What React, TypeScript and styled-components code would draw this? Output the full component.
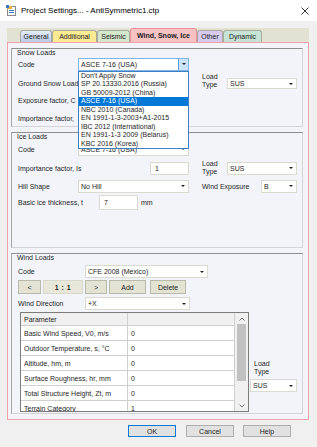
import React from "react";
import styled, { createGlobalStyle } from "styled-components";

const GlobalStyle = createGlobalStyle`
	* {
		box-sizing: border-box;
	}
	body {
		margin: 0;
		background: #ffffff;
		font-family: "Liberation Sans", Arial, sans-serif;
		font-size: 7px;
		color: #1e1e1e;
	}
`;

const Window = styled.div`
	width: 317px;
	height: 447px;
	background: #f0f0f0;
	display: flex;
	flex-direction: column;
	overflow: hidden;
`;

const TitleBar = styled.div`
	flex: none;
	height: 21px;
	background: #ffffff;
	display: flex;
	align-items: center;
	padding: 0 8px 0 6px;
	font-size: 8px;
	color: #000000;
`;

const TitleText = styled.span`
	flex: 1;
	margin-left: 4px;
`;

const Body = styled.div`
	flex: none;
	padding: 7px 8px 0 7px;
	display: flex;
	flex-direction: column;
`;

const TabStrip = styled.div`
	height: 14px;
	background: #e2e2d2;
	display: flex;
	align-items: flex-end;
	padding-left: 13px;
`;

const Tab = styled.div<{ $w: number; $bg: string; $active?: boolean }>`
	width: ${(p) => p.$w}px;
	height: ${(p) => (p.$active ? 14 : 12)}px;
	background: ${(p) => p.$bg};
	border: 1px solid ${(p) => (p.$active ? "#e8939b" : "#a9a99c")};
	border-bottom: none;
	border-radius: 3px 3px 0 0;
	display: flex;
	align-items: center;
	justify-content: center;
	font-weight: ${(p) => (p.$active ? "bold" : "normal")};
	white-space: nowrap;
	color: #1a1a1a;
`;

const Panel = styled.div`
	height: 378px;
	border: 1px solid #f0a2aa;
	background: #f3f4fa;
	padding: 5px 5px 0 3px;
	display: flex;
	flex-direction: column;
`;

const Group = styled.div<{ $h: number; $mt?: number }>`
	flex: none;
	height: ${(p) => p.$h}px;
	margin-top: ${(p) => p.$mt ?? 0}px;
	border: 1px solid #d3d3d8;
	border-top-color: #8e8e8e;
	border-left-color: #a6a6a6;
	padding-left: 6px;
	display: flex;
	flex-direction: column;
`;

const GroupTitle = styled.div`
	height: 8px;
	line-height: 8px;
	margin-left: -1px;
`;

const Row = styled.div<{ $h: number; $mt?: number }>`
	flex: none;
	height: ${(p) => p.$h}px;
	margin-top: ${(p) => p.$mt ?? 0}px;
	display: flex;
	align-items: center;
`;

const Label = styled.div<{ $w: number; $clip?: boolean }>`
	flex: none;
	width: ${(p) => p.$w}px;
	white-space: nowrap;
	overflow: ${(p) => (p.$clip ? "hidden" : "visible")};
`;

const Combo = styled.div<{ $w: number; $h?: number; $mt?: number }>`
	position: relative;
	flex: none;
	width: ${(p) => p.$w}px;
	height: ${(p) => p.$h ?? 13}px;
	margin-top: ${(p) => p.$mt ?? 0}px;
	background: #ffffff;
	border: 1px solid #dadace;
	display: flex;
	align-items: center;
	padding-left: 2px;
	white-space: nowrap;
`;

const OpenCombo = styled(Combo)`
	border-color: #7eb4ea;
	z-index: 5;
`;

const Caret = styled.span<{ $flush?: boolean }>`
	width: 0;
	height: 0;
	margin-left: ${(p) => (p.$flush ? 0 : "auto")};
	margin-right: ${(p) => (p.$flush ? 0 : 3)}px;
	border-left: 2px solid transparent;
	border-right: 2px solid transparent;
	border-top: 2px solid #202020;
`;

const ArrowButton = styled.span`
	margin-left: auto;
	align-self: stretch;
	width: 10px;
	background: #cce4f7;
	border-left: 1px solid #569de5;
	display: flex;
	align-items: center;
	justify-content: center;
`;

const DropList = styled.div`
	position: absolute;
	top: calc(100% + 1px);
	left: -1px;
	width: calc(100% + 2px);
	background: #ffffff;
	border: 1px solid #3d7fc4;
`;

const DropItem = styled.div<{ $selected?: boolean }>`
	height: 8.5px;
	line-height: 8.5px;
	padding-left: 2px;
	white-space: nowrap;
	overflow: hidden;
	background: ${(p) => (p.$selected ? "#0078d7" : "transparent")};
	color: ${(p) => (p.$selected ? "#ffffff" : "#1e1e1e")};
`;

const TextBox = styled.div<{ $w: number; $h?: number }>`
	flex: none;
	width: ${(p) => p.$w}px;
	height: ${(p) => p.$h ?? 13}px;
	background: #ffffff;
	border: 1px solid #dadace;
	padding-left: 4px;
	display: flex;
	align-items: center;
`;

const Split = styled.div<{ $mt?: number }>`
	display: flex;
	align-items: flex-start;
	margin-top: ${(p) => p.$mt ?? 0}px;
`;

const LeftCol = styled.div<{ $w: number }>`
	flex: none;
	width: ${(p) => p.$w}px;
	display: flex;
	flex-direction: column;
`;

const LoadTypeBlock = styled.div`
	display: flex;
	align-items: flex-start;
`;

const LoadTypeLabel = styled.div`
	width: 25px;
	line-height: 8px;
	flex: none;
`;

const Spacer = styled.div<{ $w: number }>`
	flex: none;
	width: ${(p) => p.$w}px;
`;

const SmallButton = styled.div<{ $w: number; $ml?: number }>`
	flex: none;
	width: ${(p) => p.$w}px;
	height: 14px;
	margin-left: ${(p) => p.$ml ?? 0}px;
	background: #e3e3d3;
	border: 1px solid #b9b9aa;
	display: flex;
	align-items: center;
	justify-content: center;
`;

const Counter = styled(SmallButton)`
	background: #e8e8da;
	border-color: #d8d8ca;
	font-weight: bold;
	letter-spacing: 0.5px;
`;

const BottomArea = styled.div`
	display: flex;
	margin-top: 1px;
`;

const GridBox = styled.div`
	flex: none;
	width: 229px;
	height: 100px;
	margin-left: 2px;
	border: 1px solid #7c7c7c;
	background: #ffffff;
	display: flex;
	overflow: hidden;
`;

const GridTable = styled.div`
	width: 214px;
	display: grid;
	grid-template-columns: 107px 107px;
	grid-template-rows: 13px;
	grid-auto-rows: 15px;
	align-content: start;
`;

const Cell = styled.div<{ $head?: boolean }>`
	border-right: 1px solid #cfcfcf;
	border-bottom: 1px solid #cfcfcf;
	background: ${(p) => (p.$head ? "#f0f0f0" : "#ffffff")};
	padding-left: 3px;
	display: flex;
	align-items: center;
	white-space: nowrap;
	overflow: hidden;
`;

const ScrollBar = styled.div`
	flex: none;
	width: 13px;
	background: #f0f0f0;
	display: flex;
	flex-direction: column;
	align-items: center;
`;

const ScrollArrow = styled.div`
	height: 11px;
	display: flex;
	align-items: center;
	justify-content: center;
`;

const Thumb = styled.div`
	width: 9px;
	height: 57px;
	background: #c1c1c1;
`;

const ScrollTrack = styled.div`
	flex: 1;
`;

const SideCol = styled.div`
	display: flex;
	flex-direction: column;
	justify-content: flex-end;
	padding-bottom: 20px;
	margin-left: 1px;
`;

const SideLabel = styled(LoadTypeLabel)`
	margin-left: 4px;
	margin-bottom: 3px;
`;

const Footer = styled.div`
	flex: none;
	height: 27px;
	display: flex;
	padding: 5px 0 0 128px;
`;

const DialogButton = styled.div<{ $default?: boolean; $ml?: number }>`
	width: 48px;
	height: 12px;
	margin-left: ${(p) => p.$ml ?? 0}px;
	background: #e1e1e1;
	border: 1px solid ${(p) => (p.$default ? "#0078d7" : "#adadad")};
	display: flex;
	align-items: center;
	justify-content: center;
`;

function AppIcon() {
	return (
		<svg width="11" height="11" viewBox="0 0 11 11">
			<rect x="1.5" y="1.5" width="8" height="9" fill="#fff" stroke="#8a8a8a" />
			<rect x="1" y="1" width="5" height="3" fill="#e8b23a" />
			<rect x="3" y="5" width="5" height="1" fill="#3a78c8" />
			<rect x="3" y="7" width="5" height="1" fill="#3a78c8" />
			<rect x="0" y="0" width="3" height="3" fill="#3a78c8" />
		</svg>
	);
}

function CloseIcon() {
	return (
		<svg width="8" height="8" viewBox="0 0 8 8">
			<path d="M0.5 0.5 L7.5 7.5 M7.5 0.5 L0.5 7.5" stroke="#222" strokeWidth="0.9" />
		</svg>
	);
}

function Chevron({ up }: { up?: boolean }) {
	return (
		<svg width="6" height="4" viewBox="0 0 6 4">
			<path d={up ? "M0.5 3.5 L3 1 L5.5 3.5" : "M0.5 0.5 L3 3 L5.5 0.5"} stroke="#606060" fill="none" strokeWidth="0.9" />
		</svg>
	);
}

function LoadType() {
	return (
		<LoadTypeLabel>
			Load
			<br />
			Type
		</LoadTypeLabel>
	);
}

const tabs = [
	{ name: "General", w: 32, bg: "linear-gradient(#e4ecf8, #b9cbe9)" },
	{ name: "Additional", w: 45, bg: "#fdeb94" },
	{ name: "Seismic", w: 33, bg: "#d4e7cb" },
	{ name: "Wind, Snow, Ice", w: 67, bg: "#f6c2c2", active: true },
	{ name: "Other", w: 26, bg: "#d6cbef" },
	{ name: "Dynamic", w: 39, bg: "#c6e4d6" },
];

const snowCodes = [
	"Don't Apply Snow",
	"SP 20.13330.2016 (Russia)",
	"GB 50009-2012 (China)",
	"ASCE 7-16 (USA)",
	"NBC 2010 (Canada)",
	"EN 1991-1-3-2003+A1-2015",
	"IBC 2012 (International)",
	"EN 1991-1-3 2009 (Belarus)",
	"KBC 2016 (Korea)",
];

const windParams = [
	["Basic Wind Speed, V0, m/s", "0"],
	["Outdoor Temperature, s, °C", "0"],
	["Altitude, hm, m", "0"],
	["Surface Roughness, hr, mm", "0"],
	["Total Structure Height, Zt, m", "0"],
	["Terrain Category", "1"],
];

export default function App() {
	return (
		<Window>
			<GlobalStyle />
			<TitleBar>
				<AppIcon />
				<TitleText>Project Settings... - AntiSymmetric1.ctp</TitleText>
				<CloseIcon />
			</TitleBar>
			<Body>
				<TabStrip>
					{tabs.map((t) => (
						<Tab key={t.name} $w={t.w} $bg={t.bg} $active={t.active}>
							{t.name}
						</Tab>
					))}
				</TabStrip>
				<Panel>
					<Group $h={79}>
						<GroupTitle>Snow Loads</GroupTitle>
						<Row $h={14}>
							<Label $w={60}>Code</Label>
							<OpenCombo $w={111}>
								ASCE 7-16 (USA)
								<ArrowButton>
									<Caret $flush />
								</ArrowButton>
								<DropList>
									{snowCodes.map((c) => (
										<DropItem key={c} $selected={c === "ASCE 7-16 (USA)"}>
											{c}
										</DropItem>
									))}
								</DropList>
							</OpenCombo>
						</Row>
						<Split $mt={2}>
							<LeftCol $w={184}>
								<Row $h={14} $mt={3}>
									<Label $w={60} $clip>
										Ground Snow Load
									</Label>
								</Row>
								<Row $h={14} $mt={3}>
									<Label $w={60} $clip>
										Exposure factor, C
									</Label>
								</Row>
								<Row $h={14} $mt={4}>
									<Label $w={60} $clip>
										Importance factor,
									</Label>
								</Row>
							</LeftCol>
							<LoadTypeBlock>
								<LoadType />
								<Combo $w={70} $h={11} $mt={5}>
									SUS
									<Caret />
								</Combo>
							</LoadTypeBlock>
						</Split>
					</Group>

					<Group $h={116} $mt={5}>
						<GroupTitle>Ice Loads</GroupTitle>
						<Row $h={14} $mt={1}>
							<Label $w={60}>Code</Label>
							<Combo $w={111}>
								ASCE 7-16 (USA)
								<Caret />
							</Combo>
						</Row>
						<Row $h={16} $mt={4}>
							<Label $w={132}>Importance factor, Is</Label>
							<TextBox $w={39}>1</TextBox>
							<Spacer $w={13} />
							<LoadType />
							<Combo $w={70}>
								SUS
								<Caret />
							</Combo>
						</Row>
						<Row $h={14} $mt={3}>
							<Label $w={60}>Hill Shape</Label>
							<Combo $w={111}>
								No Hill
								<Caret />
							</Combo>
							<Spacer $w={13} />
							<Label $w={59}>Wind Exposure</Label>
							<Combo $w={36}>
								B
								<Caret />
							</Combo>
						</Row>
						<Row $h={15} $mt={2}>
							<Label $w={81}>Basic ice thickness, t</Label>
							<TextBox $w={39} $h={15}>
								7
							</TextBox>
							<Spacer $w={3} />
							mm
						</Row>
					</Group>

					<Group $h={161} $mt={5}>
						<GroupTitle>Wind Loads</GroupTitle>
						<Row $h={13} $mt={3}>
							<Label $w={67}>Code</Label>
							<Combo $w={123}>
								CFE 2008 (Mexico)
								<Caret />
							</Combo>
						</Row>
						<Row $h={14} $mt={2}>
							<SmallButton $w={23}>&lt;</SmallButton>
							<Counter $w={40} $ml={2}>
								1 : 1
							</Counter>
							<SmallButton $w={22} $ml={2}>
								&gt;
							</SmallButton>
							<SmallButton $w={37} $ml={2}>
								Add
							</SmallButton>
							<SmallButton $w={36} $ml={4}>
								Delete
							</SmallButton>
						</Row>
						<Row $h={15} $mt={2}>
							<Label $w={67}>Wind Direction</Label>
							<Combo $w={105}>
								+X
								<Caret />
							</Combo>
						</Row>
						<BottomArea>
							<GridBox>
								<GridTable>
									<Cell $head>Parameter</Cell>
									<Cell $head />
									{windParams.map(([name, value]) => (
										<React.Fragment key={name}>
											<Cell>{name}</Cell>
											<Cell>{value}</Cell>
										</React.Fragment>
									))}
								</GridTable>
								<ScrollBar>
									<ScrollArrow>
										<Chevron up />
									</ScrollArrow>
									<Thumb />
									<ScrollTrack />
									<ScrollArrow>
										<Chevron />
									</ScrollArrow>
								</ScrollBar>
							</GridBox>
							<SideCol>
								<SideLabel>
									Load
									<br />
									Type
								</SideLabel>
								<Combo $w={47}>
									SUS
									<Caret />
								</Combo>
							</SideCol>
						</BottomArea>
					</Group>
				</Panel>
			</Body>
			<Footer>
				<DialogButton $default>OK</DialogButton>
				<DialogButton $ml={10}>Cancel</DialogButton>
				<DialogButton $ml={9}>Help</DialogButton>
			</Footer>
		</Window>
	);
}
